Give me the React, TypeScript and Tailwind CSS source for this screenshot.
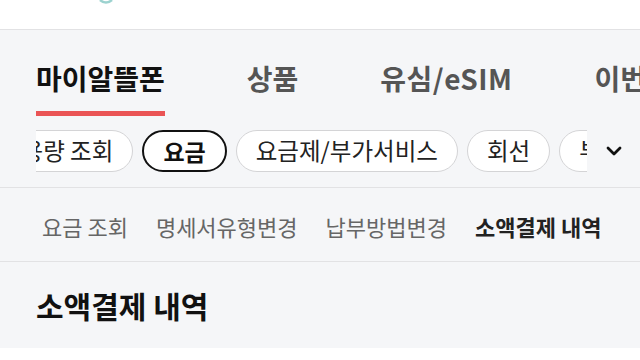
import React from "react";

const font = "font-['Noto_Sans_CJK_KR','Noto_Sans',sans-serif]";

export default function App() {
  const chips = [
    { label: "사용량 조회", active: false },
    { label: "요금", active: true },
    { label: "요금제/부가서비스", active: false },
    { label: "회선", active: false },
    { label: "부가서비스", active: false },
  ];
  return (
    <div className={`w-[640px] h-[360px] overflow-hidden bg-[#f5f6f8] ${font}`}>
      <div className="h-[30px] bg-white border-b border-[#e2e2e4] relative">
        <svg className="absolute left-[98px] top-0" width="16" height="5" viewBox="0 0 16 5">
          <path d="M2 0 Q8 5 14 0" stroke="#3aa5a0" strokeWidth="2.5" fill="none" opacity="0.5" />
        </svg>
      </div>

      <div className="flex items-start gap-[82px] pl-[36px] pt-[30px] whitespace-nowrap">
        <div className="flex flex-col">
          <span className="text-[28px] leading-[36px] font-bold text-[#111]">마이알뜰폰</span>
          <div className="mt-[15px] h-[5px] bg-[#ea5455]" />
        </div>
        <span className="text-[28px] leading-[36px] font-bold text-[#555]">상품</span>
        <span className="text-[28px] leading-[36px] font-bold text-[#555] tracking-[0.5px]">유심/eSIM</span>
        <span className="text-[28px] leading-[36px] font-bold text-[#555]">이번달혜택</span>
      </div>

      <div className="flex items-center pl-[36px] pt-[14px] pb-[15px] border-b border-[#e2e2e4]">
        <div className="w-[551px] overflow-hidden">
          <div className="flex gap-[9px] -ml-[56px] whitespace-nowrap">
            {chips.map((c) =>
              c.active ? (
                <div
                  key={c.label}
                  className="h-[42px] px-[19px] flex items-center rounded-full border-2 border-[#111] bg-white text-[23px] font-bold text-[#111] shrink-0"
                >
                  {c.label}
                </div>
              ) : (
                <div
                  key={c.label}
                  className="h-[42px] px-[19px] flex items-center rounded-full border-[1.5px] border-[#d4d4d6] bg-white text-[23.5px] text-[#222] shrink-0"
                >
                  {c.label}
                </div>
              )
            )}
          </div>
        </div>
        <svg className="ml-[19px]" width="16" height="10" viewBox="0 0 16 10" fill="none" stroke="#111" strokeWidth="2.8" strokeLinecap="round" strokeLinejoin="round">
          <path d="M2 2 L8 8 L14 2" />
        </svg>
      </div>

      <div className="h-[74px] flex items-center gap-[28px] pl-[42px] pt-[3px] border-b border-[#e2e2e4] whitespace-nowrap text-[22px]">
        <span className="text-[#666]">요금 조회</span>
        <span className="text-[#666]">명세서유형변경</span>
        <span className="text-[#666]">납부방법변경</span>
        <span className="font-bold text-[#222]">소액결제 내역</span>
      </div>

      <div className="h-[86px] flex items-center pl-[36px]">
        <span className="text-[30px] font-bold text-[#111]">소액결제 내역</span>
      </div>
      <div className="h-[20px] bg-white" />
    </div>
  );
}
